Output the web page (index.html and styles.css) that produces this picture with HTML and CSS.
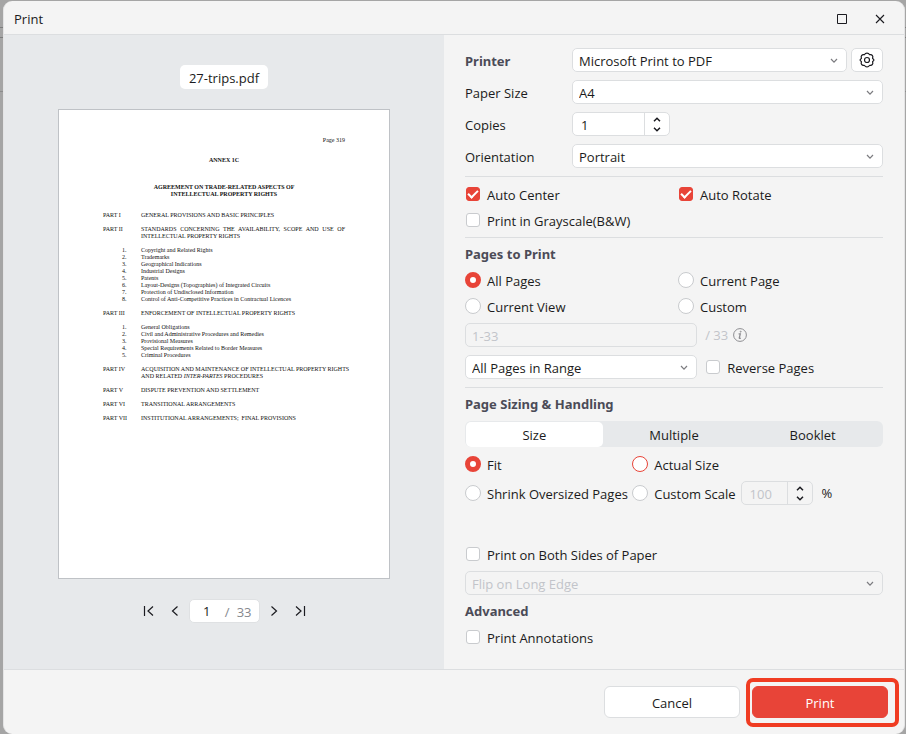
FILE: index.html
```html
<!DOCTYPE html>
<html lang="en">
<head>
<meta charset="utf-8">
<title>Print</title>
<link rel="stylesheet" href="styles.css">
</head>
<body>
<svg class="defs" aria-hidden="true">
  <symbol id="chevron" viewBox="0 0 8 6"><path d="M1 1l3 3.2L7 1" fill="none" stroke="currentColor" stroke-width="1.2"/></symbol>
  <symbol id="up" viewBox="0 0 8 5"><path d="M1 4.2l3-3 3 3" fill="none" stroke="currentColor" stroke-width="1.5"/></symbol>
  <symbol id="down" viewBox="0 0 8 5"><path d="M1 .8l3 3 3-3" fill="none" stroke="currentColor" stroke-width="1.5"/></symbol>
</svg>
<main class="dialog">
  <header class="titlebar">
    <h1>Print</h1>
    <button class="winbtn" aria-label="Maximize"><svg width="12" height="12"><path d="M1.5 1.5h9v9h-9z" fill="none" stroke="currentColor"/></svg></button>
    <button class="winbtn" aria-label="Close"><svg width="12" height="12"><path d="M2 2l8 8M10 2l-8 8" fill="none" stroke="currentColor" stroke-width="1.1"/></svg></button>
  </header>
  <div class="content">
    <section class="preview">
      <div class="filename">27-trips.pdf</div>
      <article class="page">
        <p class="folio">Page 319</p>
        <p class="annex">ANNEX 1C</p>
        <p class="agreement">AGREEMENT ON TRADE-RELATED ASPECTS OF<br>INTELLECTUAL PROPERTY RIGHTS</p>
        <dl class="parts">
          <dt>PART I</dt><dd>GENERAL PROVISIONS AND BASIC PRINCIPLES</dd>
          <dt>PART II</dt><dd class="full">STANDARDS CONCERNING THE AVAILABILITY, SCOPE AND USE OF INTELLECTUAL PROPERTY RIGHTS</dd>
        </dl>
        <ol class="items">
          <li>Copyright and Related Rights</li>
          <li>Trademarks</li>
          <li>Geographical Indications</li>
          <li>Industrial Designs</li>
          <li>Patents</li>
          <li>Layout-Designs (Topographies) of Integrated Circuits</li>
          <li>Protection of Undisclosed Information</li>
          <li>Control of Anti-Competitive Practices in Contractual Licences</li>
        </ol>
        <dl class="parts">
          <dt>PART III</dt><dd>ENFORCEMENT OF INTELLECTUAL PROPERTY RIGHTS</dd>
        </dl>
        <ol class="items">
          <li>General Obligations</li>
          <li>Civil and Administrative Procedures and Remedies</li>
          <li>Provisional Measures</li>
          <li>Special Requirements Related to Border Measures</li>
          <li>Criminal Procedures</li>
        </ol>
        <dl class="parts">
          <dt>PART IV</dt><dd>ACQUISITION AND MAINTENANCE OF INTELLECTUAL PROPERTY RIGHTS<br>AND RELATED <i>INTER-PARTES</i> PROCEDURES</dd>
          <dt>PART V</dt><dd>DISPUTE PREVENTION AND SETTLEMENT</dd>
          <dt>PART VI</dt><dd>TRANSITIONAL ARRANGEMENTS</dd>
          <dt>PART VII</dt><dd>INSTITUTIONAL ARRANGEMENTS;&nbsp; FINAL PROVISIONS</dd>
        </dl>
      </article>
      <nav class="pager" aria-label="Preview pages">
        <span class="arrows">
          <button aria-label="First page"><svg width="12" height="12"><path d="M1.5 1v10M10 1.5L5 6l5 4.5" fill="none" stroke="currentColor" stroke-width="1.2"/></svg></button>
          <button aria-label="Previous page"><svg width="12" height="12"><path d="M8.5 1.5L3.5 6l5 4.5" fill="none" stroke="currentColor" stroke-width="1.2"/></svg></button>
        </span>
        <span class="pageno"><input type="text" value="1" aria-label="Page number"><span>/</span><span>33</span></span>
        <span class="arrows">
          <button aria-label="Next page"><svg width="12" height="12"><path d="M3.5 1.5L8.5 6l-5 4.5" fill="none" stroke="currentColor" stroke-width="1.2"/></svg></button>
          <button aria-label="Last page"><svg width="12" height="12"><path d="M10.5 1v10M2 1.5L7 6l-5 4.5" fill="none" stroke="currentColor" stroke-width="1.2"/></svg></button>
        </span>
      </nav>
    </section>
    <form class="settings" id="settings">
      <section class="fields">
        <label class="heading" for="printer">Printer</label>
        <div class="line">
          <div class="select"><select id="printer"><option>Microsoft Print to PDF</option></select><svg><use href="#chevron"/></svg></div>
          <button type="button" class="gear" aria-label="Printer properties"><svg width="16" height="16" viewBox="0 0 16 16" fill="none" stroke="currentColor" stroke-width="1.2" stroke-linejoin="round"><path d="M5.7 2.4C6 1.5 6.8 1.1 8 1.1S10 1.5 10.3 2.4Q10.6 2.9 11.3 2.7C13.1 2.5 14.4 4.5 13.6 5.9Q13.4 6.4 13.9 6.7C15.2 7.5 15.2 8.5 13.9 9.3Q13.4 9.6 13.6 10.1C14.4 11.5 13.1 13.5 11.3 13.3Q10.6 13.1 10.3 13.6C10 14.5 9.2 14.9 8 14.9S6 14.5 5.7 13.6Q5.4 13.1 4.7 13.3C2.9 13.5 1.6 11.5 2.4 10.1Q2.6 9.6 2.1 9.3C.8 8.5 .8 7.5 2.1 6.7Q2.6 6.4 2.4 5.9C1.6 4.5 2.9 2.5 4.7 2.7Q5.4 2.9 5.7 2.4z"/><circle cx="8" cy="8" r="2.5"/></svg></button>
        </div>
        <label for="paper">Paper Size</label>
        <div class="select"><select id="paper"><option>A4</option></select><svg><use href="#chevron"/></svg></div>
        <label for="copies">Copies</label>
        <div class="spinner">
          <input type="number" id="copies" value="1">
          <span class="steps"><button type="button" aria-label="More copies"><svg><use href="#up"/></svg></button><button type="button" aria-label="Fewer copies"><svg><use href="#down"/></svg></button></span>
        </div>
        <label for="orientation">Orientation</label>
        <div class="select"><select id="orientation"><option>Portrait</option></select><svg><use href="#chevron"/></svg></div>
      </section>
      <section class="choices halves">
        <label class="option"><input type="checkbox" checked>Auto Center</label>
        <label class="option"><input type="checkbox" checked>Auto Rotate</label>
        <label class="option"><input type="checkbox">Print in Grayscale(B&amp;W)</label>
      </section>
      <section class="choices">
        <h2 class="heading">Pages to Print</h2>
        <div class="halves">
          <label class="option"><input type="radio" name="pages" checked>All Pages</label>
          <label class="option"><input type="radio" name="pages">Current Page</label>
          <label class="option"><input type="radio" name="pages">Current View</label>
          <label class="option"><input type="radio" name="pages">Custom</label>
        </div>
        <div class="range">
          <input class="text" type="text" placeholder="1-33" aria-label="Page range" disabled>
          <div class="side muted">/ 33<svg width="14" height="14" viewBox="0 0 14 14" fill="none" stroke="currentColor"><circle cx="7" cy="7" r="6.4"/><path d="M5.6 5.8h1.7L6.3 9.8q-.1.7.6.6l.9-.3" stroke-width="1.3"/><circle cx="7.7" cy="3.7" r=".5"/></svg></div>
          <div class="select"><select aria-label="Subset"><option>All Pages in Range</option></select><svg><use href="#chevron"/></svg></div>
          <div class="side"><label class="option"><input type="checkbox">Reverse Pages</label></div>
        </div>
      </section>
      <section class="choices last">
        <h2 class="heading">Page Sizing &amp; Handling</h2>
        <div class="tabs" role="tablist">
          <button type="button" role="tab" aria-selected="true">Size</button>
          <button type="button" role="tab" aria-selected="false">Multiple</button>
          <button type="button" role="tab" aria-selected="false">Booklet</button>
        </div>
        <div class="sizing">
          <label class="option"><input type="radio" name="size" checked>Fit</label>
          <label class="option"><input class="hot" type="radio" name="size">Actual Size</label>
          <label class="option"><input type="radio" name="size">Shrink Oversized Pages</label>
          <div class="scale">
            <label class="option"><input type="radio" name="size">Custom Scale</label>
            <div class="measure">
              <div class="spinner small">
                <input type="number" value="100" aria-label="Scale" disabled>
                <span class="steps"><button type="button" aria-label="Increase scale"><svg><use href="#up"/></svg></button><button type="button" aria-label="Decrease scale"><svg><use href="#down"/></svg></button></span>
              </div>
              <span>%</span>
            </div>
          </div>
        </div>
        <label class="option"><input type="checkbox">Print on Both Sides of Paper</label>
        <div class="select flip"><select aria-label="Flip" disabled><option>Flip on Long Edge</option></select><svg><use href="#chevron"/></svg></div>
        <h2 class="heading">Advanced</h2>
        <label class="option"><input type="checkbox">Print Annotations</label>
      </section>
    </form>
  </div>
  <footer class="actions">
    <button type="button">Cancel</button>
    <button class="primary" type="submit" form="settings">Print</button>
  </footer>
</main>
</body>
</html>
```
FILE: styles.css
```css
* { box-sizing: border-box; }

body {
  margin: 0;
  padding: 1px 1px 0 3px;
  min-height: 100vh;
  display: flex;
  background: linear-gradient(#a5a5a5 27px, #7d7d7d 27px 28px, #a5a5a5 28px 37px, #7d7d7d 37px 38px, #a5a5a5 38px 91px, #8c8c8c 91px 92px, #a5a5a5 92px);
  color: #1b1b20;
  font: 13px/24px "Open Sans", "Noto Sans", sans-serif;
}

.defs { position: absolute; width: 0; height: 0; }

button, input, select { font: inherit; color: inherit; }
button { padding: 0; border: 0; background: none; }
button svg { display: block; }
h1, h2, p, dl, dd, ol { margin: 0; padding: 0; }

.dialog {
  flex: 1;
  min-width: 0;
  display: flex;
  flex-direction: column;
  background: #f4f4f4;
  border-left: 1px solid #e4e4e5;
  border-right: 1px solid #e4e4e5;
  border-radius: 9px;
  overflow: hidden;
}

.titlebar {
  display: flex;
  align-items: center;
  height: 34px;
  padding: 2px 17px 0 10px;
  border-bottom: 1px solid #dcdee0;
}
.titlebar h1 { flex: 1; font-size: 13px; font-weight: 400; }
.winbtn { margin-left: 24px; padding: 1px; }

.content { flex: 1; display: grid; grid-template-columns: 440fr 460fr; }

.preview {
  display: flex;
  flex-direction: column;
  align-items: center;
  padding-top: 30px;
  background: #e7e9eb;
}
.filename {
  height: 24px;
  padding: 1px 9px 0;
  background: #fff;
  border-radius: 5px;
}

.page {
  width: 332px;
  height: 470px;
  margin-top: 20px;
  padding: 27px 44px 0;
  background: #fff;
  border: 1px solid #bfc2c6;
  color: #111;
  font: 6px/7px "Liberation Serif", serif;
}
.folio { text-align: right; }
.annex, .agreement { text-align: center; font-weight: 700; }
.annex { margin-top: 13px; }
.agreement { margin: 20px 0 14px; }
.parts { display: grid; grid-template-columns: 38px 1fr; row-gap: 7px; white-space: nowrap; }
.parts .full { white-space: normal; text-align: justify; }
.items { margin: 7px 0; padding-left: 38px; list-style: none; counter-reset: item; }
.items li { counter-increment: item; display: flex; white-space: nowrap; }
.items li::before { content: counter(item) "."; width: 19px; margin-left: -19px; }

.pager { display: flex; align-items: center; gap: 8px; margin-top: 20px; }
.arrows { display: flex; gap: 14px; }
.pageno {
  display: flex;
  gap: 7px;
  width: 71px;
  height: 24px;
  padding: 0 7px 0 4px;
  background: #fff;
  border: 1px solid #dfe1e3;
  border-radius: 5px;
  color: #85888e;
}
.pageno input {
  flex: 1;
  min-width: 0;
  padding: 0 0 0 2px;
  border: 0;
  background: none;
  color: #1b1b20;
  text-align: center;
}

.settings { padding: 13px 21px 0; min-width: 0; }
.settings section { border-bottom: 1px solid #dcdee0; }
.settings .last { border: 0; }
.heading {
  color: #4b4b57;
  font-family: "Noto Sans", sans-serif;
  font-size: 13px;
  font-weight: 700;
  line-height: 25px;
}

.fields {
  display: grid;
  grid-template-columns: 107px 1fr;
  grid-auto-rows: 24px;
  row-gap: 8px;
  padding-bottom: 8px;
}
.fields > label { line-height: 26px; }
.line { display: flex; gap: 4px; }
.line .select { flex: 1; }

.select { position: relative; height: 24px; }
.select select {
  display: block;
  appearance: none;
  width: 100%;
  height: 24px;
  padding: 0 24px 0 6px;
  background: #fff;
  border: 1px solid #dcdee0;
  border-radius: 5px;
}
.select svg {
  position: absolute;
  right: 9px;
  top: 10px;
  width: 8px;
  height: 6px;
  color: #7c7c80;
  pointer-events: none;
}
.gear {
  display: grid;
  place-items: center;
  width: 32px;
  background: #fff;
  border: 1px solid #dcdee0;
  border-radius: 5px;
}

.spinner {
  display: flex;
  width: 98px;
  height: 24px;
  background: #fff;
  border: 1px solid #dcdee0;
  border-radius: 5px;
}
.spinner input {
  flex: 1;
  min-width: 0;
  padding: 1px 0 0 8px;
  border: 0;
  background: none;
  appearance: textfield;
}
.spinner input::-webkit-inner-spin-button { appearance: none; }
.spinner.small { width: 72px; background: none; }
.steps {
  display: flex;
  flex-direction: column;
  justify-content: center;
  gap: 5px;
  width: 25px;
  border-left: 1px solid #dcdee0;
}
.steps button { display: grid; place-items: center; }
.steps svg { width: 8px; height: 5px; }

.choices { padding: 4px 0; }
.halves { display: grid; grid-template-columns: 1fr 1fr; column-gap: 8px; }
.option { display: flex; align-items: center; gap: 6px; height: 26px; padding-top: 2px; white-space: nowrap; }
.option input {
  appearance: none;
  flex: none;
  width: 16px;
  height: 16px;
  margin: 0 0 2px;
  background: #fff;
  border: 1px solid #c9cbce;
  border-radius: 50%;
}
.option input[type="checkbox"] { width: 14px; height: 14px; margin: 0 1px 2px; border-radius: 3px; }
.option input[type="checkbox"]:checked { display: grid; place-items: center; background: #e84438; border-color: #e84438; }
.option input[type="checkbox"]:checked::before {
  content: "";
  width: 8px;
  height: 4px;
  margin-bottom: 2px;
  border: solid #fff;
  border-width: 0 0 2px 2px;
  rotate: -45deg;
}
.option input[type="radio"]:checked { border: 5px solid #e84438; }
.option .hot { border-color: #e84438; }

.range { display: grid; grid-template-columns: 5fr 4fr; row-gap: 8px; padding: 4px 0; }
.text {
  min-width: 0;
  height: 24px;
  padding: 1px 6px 0;
  background: none;
  border: 1px solid #dcdee0;
  border-radius: 5px;
}
.text::placeholder, .muted, :disabled { color: #c2c4ca; opacity: 1; }
.side { display: flex; align-items: center; gap: 5px; height: 24px; padding-left: 8px; }
.side svg { color: #8e8e92; }

.tabs {
  display: grid;
  grid-template-columns: repeat(3, 1fr);
  height: 26px;
  margin: 4px 0;
  padding: 1px;
  background: #e7e9eb;
  border-radius: 6px;
}
.tabs button { padding-top: 1px; border-radius: 5px; }
.tabs [aria-selected="true"] { margin-right: 2px; background: #fff; }

.sizing { display: grid; grid-template-columns: 2fr 3fr; row-gap: 3px; margin-bottom: 35px; }
.scale { display: flex; align-items: center; gap: 5px; }
.measure { display: flex; gap: 9px; }
.flip { margin: 4px 0; }
.flip select { background: none; opacity: 1; }

.actions {
  display: flex;
  gap: 12px;
  justify-content: flex-end;
  align-items: center;
  height: 65px;
  padding-right: 16px;
  border-top: 1px solid #dcdee0;
}
.actions button {
  width: 136px;
  height: 32px;
  padding-top: 2px;
  background: #fff;
  border: 1px solid #dcdee0;
  border-radius: 6px;
}
.actions .primary { position: relative; background: #e84438; border-color: #e84438; color: #fff; }
.primary::after {
  content: "";
  position: absolute;
  inset: -9px -12px -10px -7px;
  border: 4px solid #f03c22;
  border-radius: 7px;
}
```
